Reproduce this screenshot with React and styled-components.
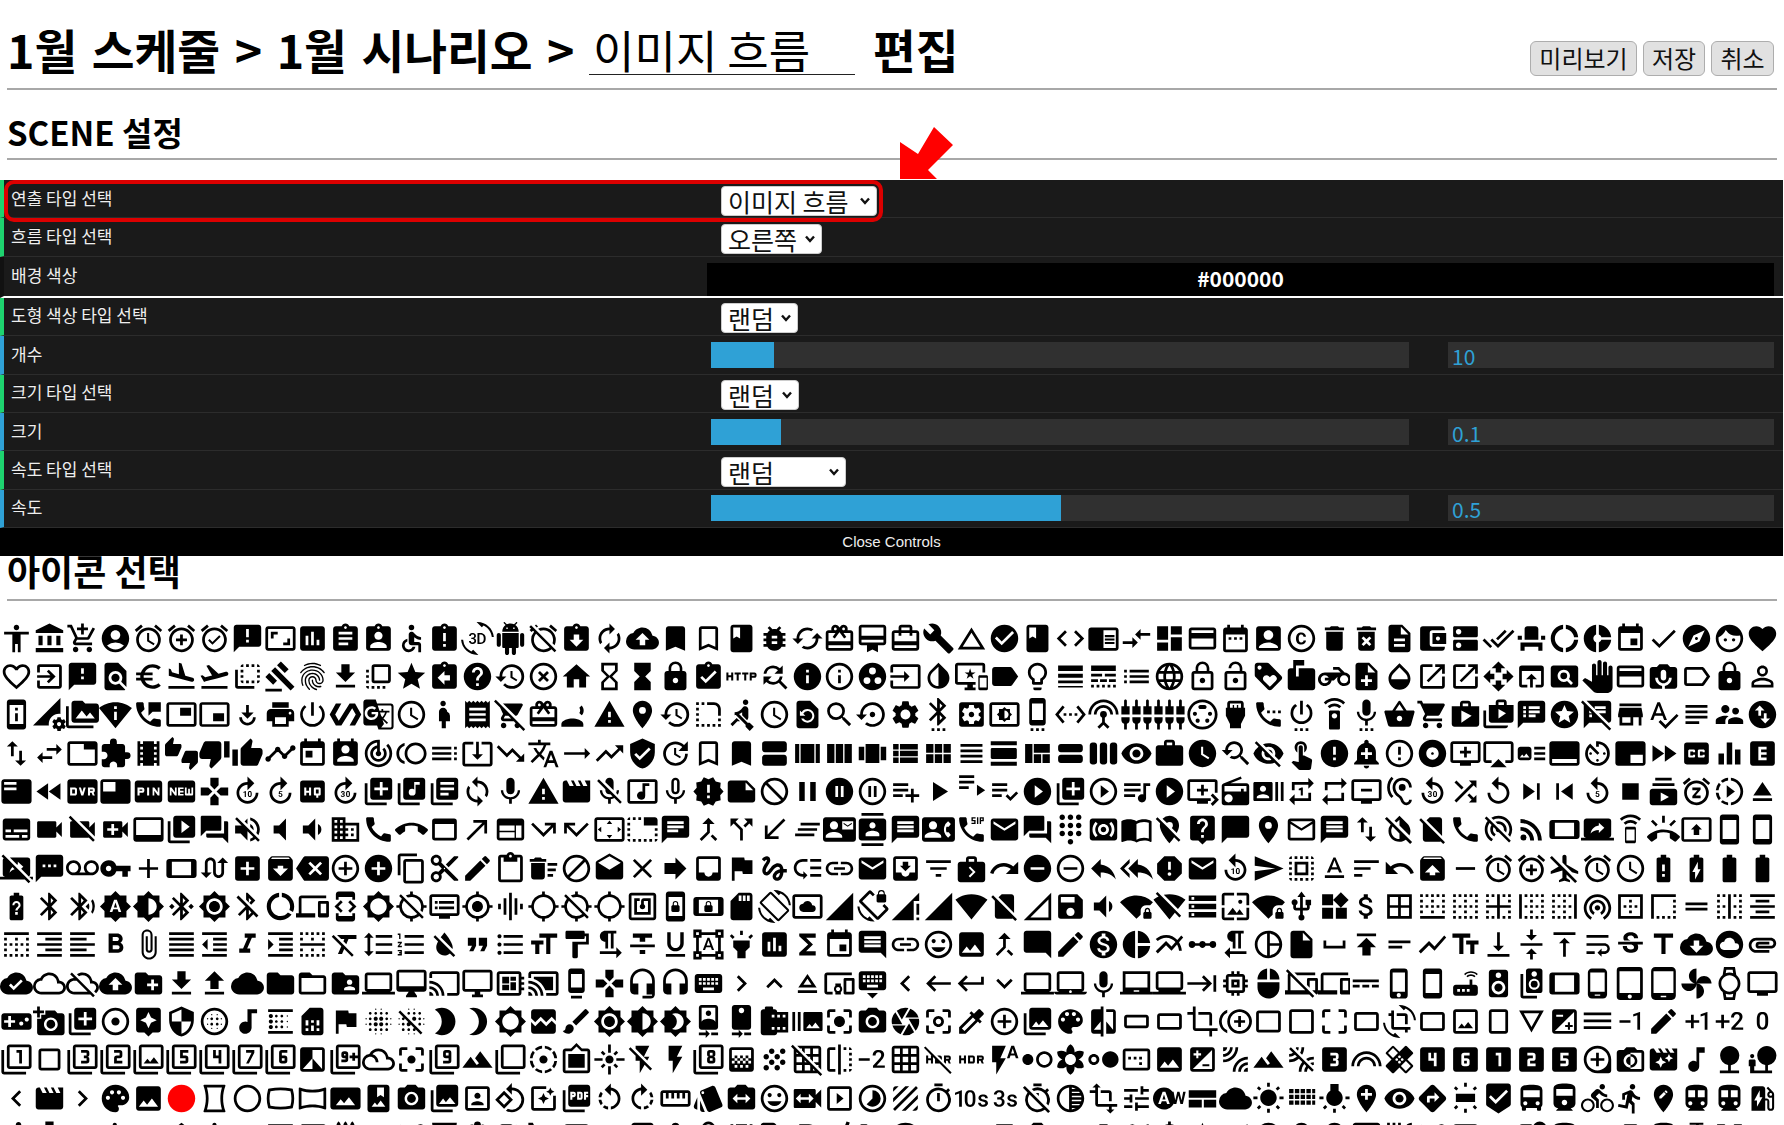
import React from "react";
import styled, { createGlobalStyle } from "styled-components";
import * as Md from "react-icons/md";

const ICONS = `
accessibility account_balance add_shopping_cart account_circle alarm alarm_add alarm_on announcement aspect_ratio assessment assignment assignment_ind accessible assignment_late 3d_rotation android alarm_off assignment_returned
autorenew backup bookmark bookmark_border book bug_report cached card_giftcard card_membership card_travel build change_history check_circle class code chrome_reader_mode compare_arrows dashboard
credit_card date_range account_box copyright delete delete_forever description account_balance_wallet dns done_all event_seat donut_large donut_small event done explore face favorite
favorite_border exit_to_app feedback find_in_page euro_symbol flight_land flight_takeoff flip_to_back gavel fingerprint get_app flip_to_front grade assignment_return help history highlight_off home
hourglass_empty hourglass_full https assignment_turned_in http find_replace info info_outline group_work input invert_colors important_devices label lightbulb_outline line_weight line_style list language
lock_outline lock_open loyalty markunread_mailbox motorcycle note_add opacity launch open_in_new open_with open_in_browser pageview pan_tool payment perm_camera_mic label_outline lock perm_identity
perm_device_information perm_data_setting perm_media perm_scan_wifi perm_phone_msg picture_in_picture picture_in_picture_alt play_for_work print power_settings_new polymer g_translate query_builder pregnant_woman receipt remove_shopping_cart redeem record_voice_over
report_problem room restore rounded_corner rowing schedule restore_page search settings_backup_restore settings settings_bluetooth settings_applications settings_brightness settings_cell settings_ethernet settings_input_antenna settings_input_component settings_input_composite
settings_input_svideo settings_input_hdmi settings_phone settings_power settings_remote settings_voice shopping_basket shopping_cart shop shop_two speaker_notes stars speaker_notes_off store spellcheck subject supervisor_account swap_vertical_circle
swap_vert swap_horiz tab extension theaters thumbs_up_down thumb_down thumb_up timeline today perm_contact_calendar track_changes toll toc system_update_alt trending_down translate trending_flat
trending_up verified_user update turned_in_not turned_in view_agenda view_array view_column view_carousel view_list view_module view_headline view_day view_quilt view_stream view_week visibility work
watch_later youtube_searched_for visibility_off touch_app error add_alert error_outline album add_to_queue airplay art_track call_to_action av_timer branding_watermark fast_forward closed_caption equalizer explicit
featured_play_list fast_rewind fiber_dvr featured_video fiber_pin fiber_new games forward_10 forward_5 high_quality forward_30 library_add library_music library_books loop mic warning movie
mic_off music_video mic_none new_releases note not_interested pause pause_circle_filled pause_circle_outline playlist_add play_arrow playlist_play playlist_add_check play_circle_filled queue play_circle_outline queue_music play_circle_filled
queue_play_next radio recent_actors repeat_one repeat remove_from_queue hearing replay_30 shuffle replay skip_next skip_previous replay_5 stop subscriptions snooze slow_motion_video eject
subtitles videocam videocam_off video_call video_label video_library question_answer volume_off volume_mute volume_down business call call_end web_asset call_made web call_missed_outgoing call_missed
settings_overscan tab_unselected chat call_merge call_split call_received clear_all contact_mail contacts message contact_phone dialer_sip email forum dialpad surround_sound import_contacts location_off
live_help chat_bubble location_on mail_outline message import_export invert_colors_off no_sim phone portable_wifi_off rss_feed stay_current_landscape screen_share speaker_phone ring_volume present_to_all stay_current_portrait stay_primary_portrait
stop_screen_share textsms voicemail vpn_key add stay_primary_landscape swap_calls add_box archive backspace add_circle_outline add_circle content_copy content_cut create content_paste delete_sweep block
drafts clear forward inbox flag gesture low_priority link mail move_to_inbox filter_list next_week redo remove_circle remove_circle_outline reply reply_all report
markunread replay_10 send select_all text_format sort undo unarchive remove access_alarm add_alarm airplanemode_inactive access_alarms access_time battery_alert battery_charging_full battery_full battery_std
battery_unknown bluetooth bluetooth_searching brightness_auto brightness_medium bluetooth_connected brightness_high bluetooth_disabled data_usage devices developer_mode brightness_low gps_off dvr gps_fixed graphic_eq gps_not_fixed location_disabled
location_searching nfc screen_lock_portrait screen_lock_landscape sd_storage screen_rotation settings_system_daydream signal_cellular_4_bar screen_lock_rotation signal_cellular_connected_no_internet_4_bar signal_cellular_4_bar signal_wifi_4_bar signal_cellular_no_sim signal_cellular_null save volume_down signal_wifi_4_bar_lock signal_wifi_off
storage wallpaper wifi_lock usb widgets attach_money border_all border_bottom border_clear border_inner border_left border_right wifi_tethering border_outer border_style drag_handle border_vertical format_align_center
border_top format_align_right format_align_left format_bold attach_file format_align_justify format_indent_decrease format_italic format_indent_increase border_horizontal format_clear format_line_spacing format_list_numbered format_color_reset format_quote format_list_bulleted format_size format_paint
format_textdirection_l_to_r format_strikethrough format_underlined format_shapes highlight insert_chart functions insert_invitation insert_comment insert_link insert_emoticon insert_photo merge_type mode_comment mode_edit monetization_on pie_chart multiline_chart
linear_scale format_textdirection_r_to_l pie_chart_outlined insert_drive_file space_bar publish short_text show_chart text_fields vertical_align_bottom vertical_align_center vertical_align_top wrap_text strikethrough_s title cloud_download cloud_circle attachment
cloud_done cloud_queue cloud_off cloud_upload create_new_folder file_download file_upload cloud folder folder_open folder_shared computer outline_desktop_mac cast outline_desktop_windows developer_board cast_connected dock
gamepad headset_mic headset keyboard keyboard_arrow_right keyboard_arrow_up outline_eject devices_other keyboard_hide keyboard_arrow_left keyboard_backspace keyboard_return keyboard_arrow_down laptop laptop_mac keyboard_voice laptop_chromebook laptop_windows
keyboard_tab memory mouse phonelink_off phonelink power_input phone_iphone smartphone router speaker speaker_group tablet phone_android tablet_mac tablet_android toys outline_watch tv
videogame_asset add_a_photo add_to_photos adjust assistant security blur_circular audiotrack blur_linear sim_card assistant_photo blur_on blur_off brightness_2 brightness_3 brightness_5 broken_image brush
brightness_7 brightness_6 brightness_4 camera_front camera_rear camera_roll burst_mode center_focus_strong camera_alt camera center_focus_weak colorize control_point collections color_lens compare crop_16_9 crop_3_2
crop control_point_duplicate crop_5_4 crop_din crop_free crop_7_5 crop_rotate crop_landscape crop_original crop_portrait details exposure dehaze exposure_neg_1 edit exposure_plus_1 exposure_plus_2 exposure_zero
filter_1 crop_square filter_3 filter_2 filter filter_5 filter_4 filter_7 filter_6 filter_b_and_w filter_9_plus filter_drama filter_center_focus filter_9 filter_hdr filter_none filter_tilt_shift filter_frames
flare flash_off flash_on filter_8 gradient grain grid_off flip exposure_neg_2 grid_on hdr_off hdr_on flash_auto hdr_weak filter_vintage hdr_strong image_aspect_ratio image
iso leak_add landscape leak_remove looks_3 looks healing looks_4 looks_6 looks_one looks_two looks_5 loupe monochrome_photos movie_filter music_note nature nature_people
navigate_before movie_creation navigate_next palette photo lens panorama_vertical panorama_fish_eye panorama_wide_angle panorama_horizontal panorama photo_album photo_camera photo_library portrait rotate_90_degrees_ccw photo_filter picture_as_pdf
rotate_left rotate_right straighten style switch_camera tag_faces switch_video slideshow timelapse texture outline_timer timer_10 timer_3 outline_timer_off tonality transform tune wb_auto
view_compact wb_cloudy wb_sunny view_comfy wb_incandescent add_location remove_red_eye directions wb_iridescent beenhere directions_bus directions_railway directions_bike directions_run edit_location directions_subway directions_transit ev_station
directions_walk directions_boat directions_car flight hotel layers local_airport local_atm local_bar local_cafe local_car_wash local_convenience_store local_dining local_drink local_florist local_gas_station local_grocery_store local_hospital
local_hotel local_laundry_service local_library local_mall local_movies local_offer local_parking local_pharmacy local_phone local_pizza local_play local_post_office local_printshop local_see local_shipping local_taxi map my_location
navigation near_me person_pin pin_drop place rate_review restaurant restaurant_menu satellite store_mall_directory streetview subway terrain traffic train tram zoom_out_map
`.trim().split(/\s+/);

const DRAWN = {
  toys: "M12 12c0-3 2.5-5.5 5.5-5.5S23 9 23 12H12zm0 0c0 3-2.5 5.5-5.5 5.5S1 15 1 12h11zm0 0c-3 0-5.5-2.5-5.5-5.5S9 1 12 1v11zm0 0c3 0 5.5 2.5 5.5 5.5S15 23 12 23V12z",
  details: "M3 4l9 16 9-16H3zm3.38 2h11.25L12 16 6.38 6z",
  view_compact: "M2 6h20v5.5H2zM2 13h9.5v5.5H2zM13 13h9v5.5h-9z",
  view_comfy:
    "M3 5h3.2v3.2H3zM7.2 5h3.2v3.2H7.2zM11.4 5h3.2v3.2h-3.2zM15.6 5h3.2v3.2h-3.2zM3 9.2h3.2v3.2H3zM7.2 9.2h3.2v3.2H7.2zM11.4 9.2h3.2v3.2h-3.2zM15.6 9.2h3.2v3.2h-3.2zM3 13.4h3.2v3.2H3zM7.2 13.4h3.2v3.2H7.2zM11.4 13.4h3.2v3.2h-3.2zM15.6 13.4h3.2v3.2h-3.2zM19.8 5H22v3.2h-2.2zM19.8 9.2H22v3.2h-2.2zM19.8 13.4H22v3.2h-2.2z",
  android:
    "M6 18c0 .55.45 1 1 1h1v3.5c0 .83.67 1.5 1.5 1.5s1.5-.67 1.5-1.5V19h2v3.5c0 .83.67 1.5 1.5 1.5s1.5-.67 1.5-1.5V19h1c.55 0 1-.45 1-1V8H6v10zM3.5 8C2.67 8 2 8.67 2 9.5v7c0 .83.67 1.5 1.5 1.5S5 17.33 5 16.5v-7C5 8.67 4.33 8 3.5 8zm17 0c-.83 0-1.5.67-1.5 1.5v7c0 .83.67 1.5 1.5 1.5s1.5-.67 1.5-1.5v-7c0-.83-.67-1.5-1.5-1.5zm-4.97-5.84l1.3-1.3c.2-.2.2-.51 0-.71-.2-.2-.51-.2-.71 0l-1.48 1.48C13.85 1.23 12.95 1 12 1c-.96 0-1.86.23-2.66.63L7.85.15c-.2-.2-.51-.2-.71 0-.2.2-.2.51 0 .71l1.31 1.31C6.97 3.26 6 5.01 6 7h12c0-1.99-.97-3.75-2.47-4.84zM10 5H9V4h1v1zm5 0h-1V4h1v1z",
  motorcycle:
    "M19.44 9.03L15.41 5H11v2h3.59l2 2H5c-2.8 0-5 2.2-5 5s2.2 5 5 5c2.46 0 4.45-1.69 4.9-4h1.65l2.77-2.77c-.21.54-.32 1.14-.32 1.77 0 2.8 2.2 5 5 5s5-2.2 5-5c0-2.65-1.97-4.77-4.56-4.97zM7.82 15C7.4 16.15 6.28 17 5 17c-1.63 0-3-1.37-3-3s1.37-3 3-3c1.28 0 2.4.85 2.82 2H5v2h2.82zM19 17c-1.66 0-3-1.34-3-3s1.34-3 3-3 3 1.34 3 3-1.34 3-3 3z",
  record_voice_over:
    "M9 15c-2.67 0-8 1.34-8 4v2h16v-2c0-2.66-5.33-4-8-4zm6.76-9.64l-1.68 1.69c.84 1.18.84 2.71 0 3.89l1.68 1.69c2.02-2.02 2.02-5.07 0-7.27z",
};

const iconOf = (name) =>
  Md["Md" + name.split("_").map((s) => s[0].toUpperCase() + s.slice(1)).join("")];

const rows = [
  { kind: "select", label: "연출 타입 선택", value: "이미지 흐름", width: 156 },
  { kind: "select", label: "흐름 타입 선택", value: "오른쪽", width: 101 },
  { kind: "color", label: "배경 색상", value: "#000000" },
  { kind: "select", label: "도형 색상 타입 선택", value: "랜덤", width: 77 },
  { kind: "number", label: "개수", value: "10", fill: 63 },
  { kind: "select", label: "크기 타입 선택", value: "랜덤", width: 78 },
  { kind: "number", label: "크기", value: "0.1", fill: 70 },
  { kind: "select", label: "속도 타입 선택", value: "랜덤", width: 125 },
  { kind: "number", label: "속도", value: "0.5", fill: 350 },
];

const GlobalStyle = createGlobalStyle`
  html, body {
    margin: 0;
    background: #fff;
    overflow: hidden;
    font-family: "Noto Sans CJK KR", "Noto Sans", sans-serif;
  }
`;

const Page = styled.div`
  width: 1784px;
  height: 1125px;
  overflow: hidden;
`;

const Header = styled.header`
  height: 88px;
  margin: 0 7px;
  display: flex;
  justify-content: space-between;
  align-items: flex-start;
  border-bottom: 2px solid #a8a8a8;
`;

const Title = styled.h1`
  margin: 0;
  padding-top: 16px;
  display: flex;
  align-items: baseline;
  font-size: 46.5px;
  line-height: 66px;
  font-weight: 700;
  color: #000;
  white-space: pre;
  word-spacing: 4px;
`;

const SceneName = styled.input`
  width: 266px;
  height: 48px;
  margin: 0 18px 0 0;
  padding: 0 4px;
  box-sizing: border-box;
  border: none;
  border-bottom: 1px solid #222;
  outline: none;
  font: 400 45px/48px "Noto Sans CJK KR", sans-serif;
`;

const Actions = styled.div`
  display: flex;
  gap: 6px;
  padding: 41px 3px 0 0;
`;

const Action = styled.button`
  height: 35px;
  width: ${(p) => p.$width}px;
  padding: 0 0 2px;
  background: #e1e1e1;
  border: 1px solid #adadad;
  border-radius: 6px;
  font: 400 24px/1 "Noto Sans CJK KR", sans-serif;
  color: #111;
`;

const SectionTitle = styled.h2`
  margin: 0 7px;
  height: ${(p) => p.$height}px;
  padding-top: ${(p) => p.$top}px;
  box-sizing: border-box;
  font-size: ${(p) => p.$size}px;
  line-height: ${(p) => p.$line}px;
  font-weight: 700;
  color: #000;
  border-bottom: 2px solid #a8a8a8;
`;

const Panel = styled.div`
  position: relative;
  margin-top: 20px;
  width: 1783px;
  background: #1a1a1a;
  color: #eee;
`;

const Highlight = styled.div`
  position: absolute;
  left: 4px;
  top: 0;
  width: 879px;
  height: 42px;
  box-sizing: border-box;
  border: 4px solid #dc0000;
  border-radius: 10px;
  pointer-events: none;
`;

const Arrow = styled.svg`
  position: absolute;
  left: 900px;
  top: 127px;
`;

const Row = styled.div`
  height: ${(p) => (p.$kind === "color" ? 41 : 38.4)}px;
  box-sizing: border-box;
  display: flex;
  align-items: ${(p) => (p.$kind === "color" ? "flex-end" : "center")};
  padding-right: 9px;
  border-left: 4px solid
    ${(p) => (p.$kind === "select" ? "#1ed36f" : p.$kind === "number" ? "#2fa1d6" : "#111")};
  border-bottom: ${(p) => (p.$kind === "color" ? "2px solid #fff" : "1px solid #2c2c2c")};
`;

const Label = styled.div`
  width: 703px;
  flex: none;
  padding-left: 7px;
  padding-bottom: 2px;
  box-sizing: border-box;
  font-size: 17px;
  line-height: 20px;
  text-shadow: 0 -1px 0 #111;
  align-self: center;
`;

const Control = styled.div`
  flex: 1;
  display: flex;
  align-items: center;
  gap: 39px;
  padding-left: ${(p) => p.$inset}px;
`;

const Picker = styled.button`
  width: ${(p) => p.$width}px;
  height: 30px;
  margin-top: 4px;
  padding: 0 6px 0 6px;
  display: flex;
  align-items: center;
  justify-content: space-between;
  background: #fff;
  color: #111;
  border: 1px solid #ccc;
  border-radius: 4px;
  font: 400 25px/28px "Noto Sans CJK KR", sans-serif;
`;

const Swatch = styled.div`
  flex: 1;
  height: 33px;
  background: #000;
  color: #fff;
  text-align: center;
  font-size: 21px;
  line-height: 30px;
  font-weight: 700;
`;

const Track = styled.div`
  width: 698px;
  height: 26px;
  background: #303030;
`;

const Fill = styled.div`
  height: 100%;
  background: #2fa1d6;
`;

const NumberBox = styled.div`
  flex: 1;
  height: 26px;
  padding-left: 4px;
  background: #303030;
  color: #2fa1d6;
  font-size: 21px;
  line-height: 28px;
`;

const CloseBar = styled.div`
  height: 28px;
  background: #000;
  color: #eee;
  text-align: center;
  font: 400 15px/28px "Liberation Sans", sans-serif;
`;

const IconGrid = styled.div`
  display: grid;
  grid-template-columns: repeat(54, 32.95px);
  grid-auto-rows: 38.33px;
  padding-top: 18px;
`;

const IconCell = styled.span`
  display: flex;
  align-items: center;
  justify-content: center;
  color: ${(p) => (p.$picked ? "#f00" : "#000")};
  font-size: 33px;
  transform: ${(p) => (p.$raised ? "translateY(-8px)" : "none")};
`;

const Chevron = () => (
  <svg width="10" height="8" viewBox="0 0 10 8">
    <path d="M1 1.5l4 4.5 4-4.5" fill="none" stroke="#111" strokeWidth="2.4" />
  </svg>
);

const App = () => (
  <Page>
    <GlobalStyle />
    <Header>
      <Title>
        {"1월 스케줄 > 1월 시나리오 > "}
        <SceneName readOnly value="이미지 흐름" />
        {"편집"}
      </Title>
      <Actions>
        <Action $width={107}>미리보기</Action>
        <Action $width={62}>저장</Action>
        <Action $width={63}>취소</Action>
      </Actions>
    </Header>

    <SectionTitle $height={70} $top={22} $size={33} $line={40}>SCENE 설정</SectionTitle>

    <Arrow width="54" height="52" viewBox="0 0 54 52">
      <polygon points="0,15 18,27 34,0 53,18 28,43 37,52 0,52" fill="#f00" />
    </Arrow>

    <Panel>
      {rows.map((r) => (
        <Row key={r.label} $kind={r.kind}>
          <Label>{r.label}</Label>
          {r.kind === "select" && (
            <Control $inset={14}>
              <Picker $width={r.width}>
                {r.value}
                <Chevron />
              </Picker>
            </Control>
          )}
          {r.kind === "color" && (
            <Control $inset={0}>
              <Swatch>{r.value}</Swatch>
            </Control>
          )}
          {r.kind === "number" && (
            <Control $inset={4}>
              <Track>
                <Fill style={{ width: r.fill }} />
              </Track>
              <NumberBox>{r.value}</NumberBox>
            </Control>
          )}
        </Row>
      ))}
      <CloseBar>Close Controls</CloseBar>
      <Highlight />
    </Panel>

    <SectionTitle $height={45} $top={0} $size={36} $line={28}>아이콘 선택</SectionTitle>

    <IconGrid>
      {ICONS.map((name, i) => {
        const Icon = iconOf(name);
        return (
          <IconCell key={i} $picked={name === "lens"} $raised={name === "playlist_play"}>
            {DRAWN[name] ? (
              <svg width="1em" height="1em" viewBox="0 0 24 24" fill="currentColor">
                <path d={DRAWN[name]} />
              </svg>
            ) : Icon ? (
              <Icon />
            ) : null}
          </IconCell>
        );
      })}
    </IconGrid>
  </Page>
);

export default App;
